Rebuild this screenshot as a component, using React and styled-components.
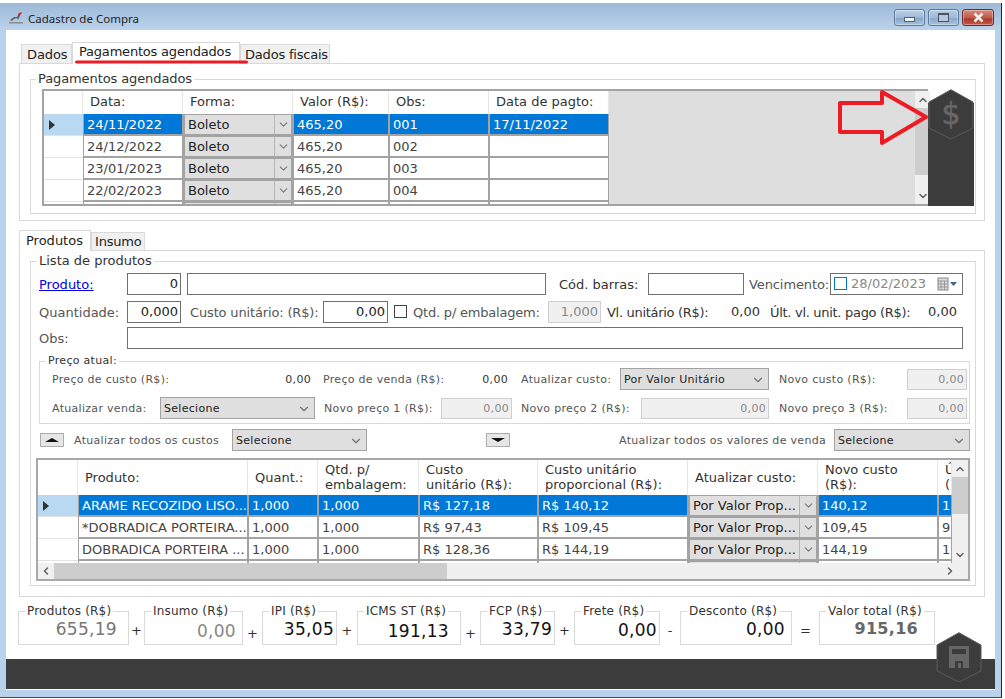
import React from 'react';
import styled, { createGlobalStyle } from 'styled-components';
import { ChevronDown, ChevronUp, ChevronLeft, ChevronRight } from 'lucide-react';

const Global = createGlobalStyle`
  html, body { margin: 0; padding: 0; background: #fff; }
  * { box-sizing: border-box; }
  body { font-family: "DejaVu Sans", Verdana, sans-serif; font-size: 13px; color: #555; width: 1005px; height: 699px; overflow: hidden; }
`;

const Window = styled.div`
  position: relative; width: 1002px; height: 695px; margin-top: 3px; background: #b9d1ea;
  border-right: 1px solid #1c2a33; border-bottom: 1px solid #155a6e; display: flex; flex-direction: column;
`;
const TitleBar = styled.div`
  height: 27px; flex: none; display: flex; align-items: center; padding: 2px 7px 0 8px;
  background: linear-gradient(#9db9d7, #bbd3ec);
`;
const TitleText = styled.span`
  font-family: "Noto Sans", sans-serif; font-size: 11.5px; color: #222; margin: 1px 0 0 4px; flex: 1;
`;
const WinBtn = styled.div`
  width: ${p => p.$w}px; height: 17px; margin-left: ${p => p.$ml || 0}px; border: 1px solid ${p => p.$close ? '#6d2a2a' : '#5e7a99'};
  border-radius: 3px; display: flex; align-items: center; justify-content: center;
  background: ${p => p.$close ? 'linear-gradient(#d68a7c, #c25a4a 50%, #a93a2c 60%, #c65a4a)' : p.$dim ? 'linear-gradient(#b6cde4, #9fbbd8 50%, #8ba9cb 55%, #a6c2de)' : 'linear-gradient(#c0d4e8, #9db8d6 50%, #86a5c9 55%, #a6c2de)'};
  box-shadow: inset 0 0 0 1px rgba(255,255,255,.35);
`;
const MinGlyph = styled.i`
  width: 11px; height: 5px; margin-top: 3px; background: #eef2f6; border: 1px solid #58606c; display: block;
`;
const MaxGlyph = styled.i`
  width: 11px; height: 9px; background: #b9c9dc; border: 1px solid #4a5360; border-top-width: 2px; display: block;
`;
const Client = styled.div`
  width: 989px; height: 660px; margin-left: 6px; background: #fff; display: flex; flex-direction: column; padding-top: 12px;
`;
const TabStrip = styled.div`
  height: ${p => p.$h}px; margin: ${p => p.$mt || 0}px 0 0 13px; display: flex; align-items: flex-end; padding-left: ${p => p.$pl || 0}px; flex: none;
`;
const Tab = styled.div`
  height: ${p => p.$active ? p.$h + 1 : p.$h - 2}px; width: ${p => p.$w}px; margin-bottom: ${p => p.$active ? -1 : 0}px; position: relative;
  border: 1px solid #d9d9d9; border-bottom: none; background: ${p => p.$active ? '#fff' : '#f0f0f0'};
  color: #222; padding-left: ${p => p.$pl}px; line-height: ${p => p.$lh}px; white-space: nowrap; font-size: 13px; letter-spacing: ${p => p.$ls || 0}px; z-index: ${p => p.$active ? 1 : 0};
`;
const Panel = styled.div`
  margin-left: 13px; width: 966px; height: ${p => p.$h}px; border: 1px solid #d9d9d9; padding: ${p => p.$pt}px 0 0 10px; flex: none;
`;
const Group = styled.fieldset`
  margin: ${p => p.$m || '0'}; padding: 0; width: ${p => p.$w}px; height: ${p => p.$h}px; border: 1px solid #d9d9d9; min-width: 0; display: block;
`;
const Legend = styled.legend`
  margin-left: ${p => p.$ml ?? 7}px; padding: 0 2px; font-size: ${p => p.$fs || 13}px; line-height: 16px; color: #333; white-space: nowrap; letter-spacing: ${p => p.$ls || 0}px;
`;
const GridWrap = styled.div`
  display: flex; height: 117px; margin: 2px 0 0 11px;
`;
const PayGrid = styled.div`
  width: 886px; height: 117px; border: 2px solid #a3a3a3; border-right: none; display: flex; background: #dedede;
`;
const TableClip = styled.div`
  width: ${p => p.$w}px; height: ${p => p.$h}px; overflow: hidden; flex: none; background: ${p => p.$bg || 'transparent'};
`;
const Row = styled.div`
  display: flex; height: ${p => p.$h || 22}px; flex: none; width: max-content;
`;
const HeadCell = styled.div`
  width: ${p => p.$w}px; padding: 0 0 ${p => p.$pb || 0}px 7px; display: flex; align-items: center; background: #fff; border-right: 1px solid #e6e6e6; color: #333;
  font-size: 13px; line-height: 15px; overflow: hidden; flex: none;
`;
const Indicator = styled.div`
  width: ${p => p.$w}px; flex: none; background: ${p => p.$sel ? '#b9d9f2' : '#fff'}; border-bottom: 1px solid #e2e2e2; display: flex; align-items: center; padding-left: 5px;
`;
const Arrowhead = styled.i`
  display: block; width: 0; height: 0; border-left: 6px solid #333; border-top: 5px solid transparent; border-bottom: 5px solid transparent;
`;
const Cell = styled.div`
  width: ${p => p.$w}px; flex: none; padding-left: 3px; display: flex; align-items: center; white-space: nowrap; overflow: hidden;
  border: 1px solid #a3a3a3; border-top: none; border-bottom-width: 2px;
  background: ${p => p.$sel ? '#0078d7' : '#fff'}; color: ${p => p.$sel ? '#fff' : '#444'};
`;
const GridCombo = styled.div`
  width: ${p => p.$w}px; flex: none; display: flex; align-items: center; background: #dfdfdf; border: 2px solid #a3a3a3; border-top-width: 1px; color: #222;
  padding-left: 3px; overflow: hidden; white-space: nowrap;
`;
const GridComboText = styled.span`
  flex: 1;
`;
const GridComboArrow = styled.span`
  width: 17px; height: 100%; flex: none; border-left: 1px solid #b5b5b5; display: flex; align-items: center; justify-content: center; color: #777;
`;
const VScroll = styled.div`
  width: ${p => p.$w}px; flex: none; height: 100%; background: #f0f0f0; display: flex; flex-direction: column; color: #606060;
`;
const HScroll = styled.div`
  height: 16px; flex: none; background: #f0f0f0; display: flex; align-items: center; color: #606060;
`;
const ScrollBtn = styled.div`
  flex: none; width: ${p => p.$w || 'auto'}; height: ${p => p.$h || 'auto'}; display: flex; align-items: center; justify-content: center;
`;
const Track = styled.div`
  flex: 1; display: flex; flex-direction: ${p => p.$row ? 'row' : 'column'}; height: 100%;
`;
const Thumb = styled.div`
  background: #cdcdcd; flex: none; width: ${p => p.$w || '100%'}; height: ${p => p.$h || '100%'};
`;
const SideBar = styled.div`
  width: 46px; height: 117px; flex: none; background: linear-gradient(transparent 14px, #3c3c3c 14px);
`;
const HexSvg = styled.svg`
  display: block;
`;
const FormRow = styled.div`
  display: flex; align-items: center; height: ${p => p.$h}px; margin: ${p => p.$m || '0'}; padding-left: ${p => p.$pl || 0}px; white-space: nowrap;
`;
const Label = styled.span`
  width: ${p => p.$w}px; margin-left: ${p => p.$ml || 0}px; flex: none; font-size: ${p => p.$fs || 13}px; color: ${p => p.$c || '#555'}; white-space: nowrap;
  letter-spacing: ${p => p.$ls ?? (p.$fs === 11 ? 0.3 : 0)}px; padding-top: 1px;
`;
const LinkLabel = styled.a`
  width: ${p => p.$w}px; flex: none; color: #0000e0; text-decoration: underline; font-size: 13px; padding-top: 1px;
`;
const Value = styled.span`
  width: ${p => p.$w}px; margin-left: ${p => p.$ml || 0}px; flex: none; text-align: right; font-size: ${p => p.$fs || 13}px; color: #333; letter-spacing: ${p => p.$fs === 11 ? 0.3 : 0}px;
`;
const TextBox = styled.input`
  width: ${p => p.$w}px; height: ${p => p.$h || 22}px; margin-left: ${p => p.$ml || 0}px; flex: none; border: 1px solid ${p => p.disabled ? '#cfcfcf' : '#707070'};
  background: ${p => p.disabled ? '#f0f0f0' : '#fff'}; font: ${p => p.$fs || 13}px "DejaVu Sans", sans-serif; color: ${p => p.disabled ? '#888' : '#222'};
  text-align: right; padding: 0 2px; outline: none; border-radius: 0; opacity: 1; -webkit-text-fill-color: ${p => p.disabled ? '#888' : '#222'};
  letter-spacing: ${p => p.$fs === 11 ? 0.3 : 0}px;
`;
const Check = styled.i`
  width: 13px; height: 13px; margin-left: ${p => p.$ml || 0}px; flex: none; border: 1px solid ${p => p.$blue ? '#0078d7' : '#444'}; background: #fff; display: block;
`;
const DateBox = styled.div`
  width: ${p => p.$w}px; height: 22px; flex: none; border: 1px solid #707070; display: flex; align-items: center; padding-left: 3px; color: #888; gap: 4px;
`;
const DateText = styled.span`
  flex: 1;
`;
const Combo = styled.div`
  width: ${p => p.$w}px; height: 22px; margin-left: ${p => p.$ml || 0}px; flex: none; display: flex; align-items: center; justify-content: space-between;
  background: #dfdfdf; border: 1px solid #a3a3a3; padding: 1px 3px 0 3px; font-size: 11px; color: #222; letter-spacing: .3px;
`;
const ComboChevron = styled(ChevronDown)`
  color: #707070; flex: none;
`;
const TriBtn = styled.div`
  width: 24px; height: 14px; margin-left: ${p => p.$ml || 0}px; flex: none; background: #e6e6e6; border: 1px solid #adadad; display: flex; align-items: center; justify-content: center;
`;
const Tri = styled.i`
  display: block; width: 0; height: 0; border-left: 7px solid transparent; border-right: 7px solid transparent;
  ${p => p.$down ? 'border-top: 4px solid #111;' : 'border-bottom: 4px solid #111;'}
`;
const ProdGrid = styled.div`
  width: 934px; height: 123px; margin: 7px 0 0 5px; border: 2px solid #a8a8a8; display: flex; flex-direction: column;
`;
const ProdTop = styled.div`
  display: flex; height: 103px; flex: none;
`;
const TotalsRow = styled.div`
  display: flex; padding-left: 12px; margin-top: 6px; height: 42px; flex: none;
`;
const TotalValue = styled.div`
  text-align: right; padding-right: ${p => p.$pr}px; font-size: ${p => p.$fs || 17}px; line-height: 24px; margin-top: ${p => p.$mt || 0}px; font-weight: ${p => p.$b ? 700 : 400}; color: ${p => p.$c || '#111'}; letter-spacing: .3px;
`;
const Op = styled.div`
  width: ${p => p.$w}px; flex: none; text-align: center; font-size: 13px; color: #333; padding-top: ${p => p.$pt || 22}px;
`;
const BottomBar = styled.div`
  height: 30px; margin-top: 14px; background: #3c3c3c; flex: none;
`;
const Overlay = styled.svg`
  position: absolute; left: ${p => p.$x}px; top: ${p => p.$y}px; display: block; pointer-events: none; z-index: 3;
`;

const Hex = ({ children }) => (
  <HexSvg width="46" height="50" viewBox="0 0 46 50">
    <polygon points="23,0.7 45,13 45,39 23,50 1,39 1,13" fill="#3c3c3c" stroke="#5a5a5a" strokeWidth="1" />
    {children}
  </HexSvg>
);

const payCols = [100, 110, 96, 100, 120];
const pays = [
  ['24/11/2022', '465,20', '001', '17/11/2022'],
  ['24/12/2022', '465,20', '002', ''],
  ['23/01/2023', '465,20', '003', ''],
  ['22/02/2023', '465,20', '004', ''],
  ['', '', '', ''],
];
const prodCols = [170, 70, 101, 119, 150, 130, 120, 14];
const prodHeads = [
  ['Produto:'], ['Quant.:'], ['Qtd. p/', 'embalagem:'], ['Custo', 'unitário (R$):'],
  ['Custo unitário', 'proporcional (R$):'], ['Atualizar custo:'], ['Novo custo', '(R$):'], ['Ú', '('],
];
const prods = [
  ['ARAME RECOZIDO LISO...', '1,000', '1,000', 'R$ 127,18', 'R$ 140,12', '140,12', '1'],
  ['*DOBRADICA PORTEIRA...', '1,000', '1,000', 'R$ 97,43', 'R$ 109,45', '109,45', '9'],
  ['DOBRADICA PORTEIRA ...', '1,000', '1,000', 'R$ 128,36', 'R$ 144,19', '144,19', '1'],
  ['', '', '', '', '', '', ''],
];
const totals = [
  { l: 'Produtos (R$)', v: '655,19', w: 111, pr: 11, c: '#777', mt: -2, op: '+', ow: 15, opt: 20 },
  { l: 'Insumo (R$)', v: '0,00', w: 99, pr: 6, c: '#888', mt: 0, op: '+', ow: 19, opt: 23 },
  { l: 'IPI (R$)', v: '35,05', w: 75, pr: 2, mt: -2, op: '+', ow: 20, opt: 20 },
  { l: 'ICMS ST (R$)', v: '191,13', w: 104, pr: 11, mt: 0, op: '+', ow: 19, opt: 23 },
  { l: 'FCP (R$)', v: '33,79', w: 75, pr: 2, mt: -2, op: '+', ow: 19, opt: 20 },
  { l: 'Frete (R$)', v: '0,00', w: 86, pr: 2, mt: -1, op: '-', ow: 20, opt: 20 },
  { l: 'Desconto (R$)', v: '0,00', w: 112, pr: 6, mt: -2, op: '=', ow: 27, opt: 20 },
  { l: 'Valor total (R$)', v: '915,16', w: 116, pr: 16, c: '#666', b: true, fs: 16, mt: -2 },
];

export default function App() {
  return (
    <Window>
      <Global />
      <TitleBar>
        <svg width="16" height="14" viewBox="0 0 16 14">
          <path d="M2 9 L6 6 L9 6 L11 2 L13 2 L12 5 L10 9 L9 7 L6 8 L4 10 Z" fill="#666" />
          <path d="M10 3 L13 1 L14 2 L11 5 Z" fill="#c8302c" />
          <rect x="1" y="11" width="14" height="1.5" fill="#8a8a8a" />
        </svg>
        <TitleText>Cadastro de Compra</TitleText>
        <WinBtn $w={31}><MinGlyph /></WinBtn>
        <WinBtn $w={31} $ml={3} $dim><MaxGlyph /></WinBtn>
        <WinBtn $w={32} $ml={3} $close>
          <svg width="13" height="11" viewBox="0 0 13 11"><path d="M2.5 1.5 L10.5 9.5 M10.5 1.5 L2.5 9.5" stroke="#f4eeee" strokeWidth="2.6" /></svg>
        </WinBtn>
      </TitleBar>
      <Client>
        <TabStrip $h={21} $pl={2}>
          <Tab $w={51} $h={21} $pl={5} $lh={19} $ls={-0.1}>Dados</Tab>
          <Tab $w={168} $h={21} $active $pl={6} $lh={17} $ls={-0.2}>Pagamentos agendados</Tab>
          <Tab $w={90} $h={21} $pl={4} $lh={19} $ls={-0.2}>Dados fiscais</Tab>
        </TabStrip>
        <Panel $h={158} $pt={7}>
          <Group $w={946} $h={143}>
            <Legend $ml={5} $ls={-0.1}>Pagamentos agendados</Legend>
            <GridWrap>
              <PayGrid>
                <TableClip $w={871} $h={113}>
                  <Row $h={23}>
                    <HeadCell $w={39} />
                    {['Data:', 'Forma:', 'Valor (R$):', 'Obs:', 'Data de pagto:'].map((t, i) => (
                      <HeadCell key={t} $w={payCols[i]} $pb={3}>{t}</HeadCell>
                    ))}
                  </Row>
                  {pays.map((r, i) => (
                    <Row key={i}>
                      <Indicator $w={39} $sel={i === 0}>{i === 0 && <Arrowhead />}</Indicator>
                      <Cell $w={100} $sel={i === 0}>{r[0]}</Cell>
                      <GridCombo $w={110}>
                        <GridComboText>{r[0] && 'Boleto'}</GridComboText>
                        <GridComboArrow><ChevronDown size={13} /></GridComboArrow>
                      </GridCombo>
                      <Cell $w={96} $sel={i === 0}>{r[1]}</Cell>
                      <Cell $w={100} $sel={i === 0}>{r[2]}</Cell>
                      <Cell $w={120} $sel={i === 0}>{r[3]}</Cell>
                    </Row>
                  ))}
                </TableClip>
                <VScroll $w={15}>
                  <ScrollBtn $h="17px"><ChevronUp size={12} strokeWidth={3} /></ScrollBtn>
                  <Track>
                    <Thumb $h="67px" />
                  </Track>
                  <ScrollBtn $h="17px"><ChevronDown size={12} strokeWidth={3} /></ScrollBtn>
                </VScroll>
              </PayGrid>
              <SideBar>
                <Hex>
                  <text x="23" y="35" textAnchor="middle" fontFamily="DejaVu Sans, sans-serif" fontSize="30" stroke="#666" strokeWidth="0.6" fill="#666">$</text>
                </Hex>
              </SideBar>
            </GridWrap>
          </Group>
        </Panel>
        <TabStrip $h={20} $mt={9}>
          <Tab $w={72} $h={20} $active $pl={6} $lh={19}>Produtos</Tab>
          <Tab $w={54} $h={20} $pl={3} $lh={18} $ls={-0.2}>Insumo</Tab>
        </TabStrip>
        <Panel $h={347} $pt={2}>
          <Group $w={946} $h={333}>
            <Legend $ml={6}>Lista de produtos</Legend>
            <FormRow $h={23} $m="3px 0 0" $pl={8}>
              <LinkLabel $w={88}>Produto:</LinkLabel>
              <TextBox $w={54} readOnly value="0" />
              <TextBox $w={359} $ml={6} readOnly value="" />
              <Label $w={89} $ml={13} $c="#333">Cód. barras:</Label>
              <TextBox $w={96} readOnly value="" />
              <Label $w={81} $ml={5} $ls={-0.1}>Vencimento:</Label>
              <DateBox $w={133}>
                <Check $blue />
                <DateText>28/02/2023</DateText>
                <svg width="25" height="14" viewBox="0 0 25 14">
                  <rect x="1" y="1" width="10" height="12" fill="#ddd" stroke="#888" />
                  <path d="M1 4 H11 M1 7 H11 M1 10 H11 M4 4 V13 M7.500 4 V13" stroke="#999" />
                  <path d="M13 5 H20 L16.500 9 Z" fill="#44608a" />
                </svg>
              </DateBox>
            </FormRow>
            <FormRow $h={23} $m="5px 0 0" $pl={8}>
              <Label $w={88}>Quantidade:</Label>
              <TextBox $w={54} readOnly value="0,000" />
              <Label $w={128} $ml={9} $ls={-0.15}>Custo unitário: (R$):</Label>
              <TextBox $w={65} $ml={5} readOnly value="0,00" />
              <Check $ml={6} />
              <Label $w={135} $ml={6} $ls={-0.2}>Qtd. p/ embalagem:</Label>
              <TextBox $w={53} disabled value="1,000" />
              <Label $w={101} $ml={6} $c="#333" $ls={-0.3}>Vl. unitário (R$):</Label>
              <Value $w={52}>0,00</Value>
              <Label $w={140} $ml={10} $c="#333" $ls={-0.3}>Últ. vl. unit. pago (R$):</Label>
              <Value $w={47}>0,00</Value>
            </FormRow>
            <FormRow $h={23} $m="3px 0 0" $pl={8}>
              <Label $w={88}>Obs:</Label>
              <TextBox $w={836} readOnly value="" />
            </FormRow>
            <Group $w={931} $h={71} $m="4px 0 0 8px">
              <Legend $ml={6} $fs={11} $ls={0.3}>Preço atual:</Legend>
              <FormRow $h={22} $m="-1px 0 0" $pl={12}>
                <Label $w={117} $fs={11}>Preço de custo (R$):</Label>
                <Value $w={142} $fs={11}>0,00</Value>
                <Label $w={122} $ml={12} $fs={11}>Preço de venda (R$):</Label>
                <Value $w={63} $fs={11}>0,00</Value>
                <Label $w={99} $ml={13} $fs={11}>Atualizar custo:</Label>
                <Combo $w={149}>Por Valor Unitário<ComboChevron size={14} /></Combo>
                <Label $w={128} $ml={10} $fs={11}>Novo custo (R$):</Label>
                <TextBox $w={60} $h={21} $fs={11} disabled value="0,00" />
              </FormRow>
              <FormRow $h={22} $m="7px 0 0" $pl={12}>
                <Label $w={108} $fs={11}>Atualizar venda:</Label>
                <Combo $w={155}>Selecione<ComboChevron size={14} /></Combo>
                <Label $w={117} $ml={9} $fs={11}>Novo preço 1 (R$):</Label>
                <TextBox $w={71} $h={21} $fs={11} disabled value="0,00" />
                <Label $w={120} $ml={9} $fs={11}>Novo preço 2 (R$):</Label>
                <TextBox $w={128} $h={21} $fs={11} disabled value="0,00" />
                <Label $w={128} $ml={10} $fs={11}>Novo preço 3 (R$):</Label>
                <TextBox $w={60} $h={21} $fs={11} disabled value="0,00" />
              </FormRow>
            </Group>
            <FormRow $h={22} $m="5px 0 0" $pl={9}>
              <TriBtn><Tri /></TriBtn>
              <Label $w={158} $ml={10} $fs={11}>Atualizar todos os custos</Label>
              <Combo $w={135}>Selecione<ComboChevron size={14} /></Combo>
              <TriBtn $ml={119}><Tri $down /></TriBtn>
              <Label $w={215} $ml={109} $fs={11}>Atualizar todos os valores de venda</Label>
              <Combo $w={136}>Selecione<ComboChevron size={14} /></Combo>
            </FormRow>
            <ProdGrid>
              <ProdTop>
                <TableClip $w={914} $h={103} $bg="#fff">
                  <Row $h={35}>
                    <HeadCell $w={40} />
                    {prodHeads.map((t, i) => (
                      <HeadCell key={t[0]} $w={prodCols[i]} $pb={1}>
                        <span>{t[0]}{t[1] && <br />}{t[1]}</span>
                      </HeadCell>
                    ))}
                  </Row>
                  {prods.map((r, i) => (
                    <Row key={i}>
                      <Indicator $w={40} $sel={i === 0}>{i === 0 && <Arrowhead />}</Indicator>
                      {r.slice(0, 5).map((c, j) => (
                        <Cell key={j} $w={prodCols[j]} $sel={i === 0}>{c}</Cell>
                      ))}
                      <GridCombo $w={130}>
                        <GridComboText>{r[0] && 'Por Valor Prop...'}</GridComboText>
                        <GridComboArrow><ChevronDown size={13} /></GridComboArrow>
                      </GridCombo>
                      <Cell $w={120} $sel={i === 0}>{r[5]}</Cell>
                      <Cell $w={14} $sel={i === 0}>{r[6]}</Cell>
                    </Row>
                  ))}
                </TableClip>
                <VScroll $w={16}>
                  <ScrollBtn $h="17px"><ChevronUp size={12} strokeWidth={3} /></ScrollBtn>
                  <Track>
                    <Thumb $h="37px" />
                  </Track>
                  <ScrollBtn $h="17px"><ChevronDown size={12} strokeWidth={3} /></ScrollBtn>
                </VScroll>
              </ProdTop>
              <HScroll>
                <ScrollBtn $w="16px"><ChevronLeft size={12} strokeWidth={3} /></ScrollBtn>
                <Track $row>
                  <Thumb $w="393px" />
                </Track>
                <ScrollBtn $w="36px"><ChevronRight size={12} strokeWidth={3} /></ScrollBtn>
              </HScroll>
            </ProdGrid>
          </Group>
        </Panel>
        <TotalsRow>
          {totals.map(t => (
            <React.Fragment key={t.l}>
              <Group $w={t.w} $h={42}>
                <Legend $ml={6} $fs={12} $ls={0.2}>{t.l}</Legend>
                <TotalValue $pr={t.pr} $c={t.c} $b={t.b} $fs={t.fs} $mt={t.mt}>{t.v}</TotalValue>
              </Group>
              {t.op && <Op $w={t.ow} $pt={t.opt}>{t.op}</Op>}
            </React.Fragment>
          ))}
        </TotalsRow>
        <BottomBar />
      </Client>
      <Overlay $x={75} $y={56} width="173" height="6" viewBox="0 0 173 6">
        <path d="M1.500 3 H171.500" stroke="#ed1c24" strokeWidth="3" strokeLinecap="round" />
      </Overlay>
      <Overlay $x={836} $y={85} width="95" height="60" viewBox="0 0 95 60">
        <path d="M4 15 H46 V4 L90 29 L46 55 V44 H4 Z" fill="none" stroke="#ed1c24" strokeWidth="4" strokeLinejoin="round" />
      </Overlay>
      <Overlay $x={936} $y={629} width="46" height="50" viewBox="0 0 46 50">
        <polygon points="23,0.7 45,13 45,39 23,50 1,39 1,13" fill="#3c3c3c" stroke="#5a5a5a" />
        <path d="M13 14 H33 V36 H13 Z" fill="#666" />
        <rect x="16" y="17" width="14" height="5" fill="#3c3c3c" />
        <rect x="19" y="29" width="8" height="7" fill="#3c3c3c" />
        <rect x="22" y="31" width="3" height="5" fill="#666" />
      </Overlay>
    </Window>
  );
}
